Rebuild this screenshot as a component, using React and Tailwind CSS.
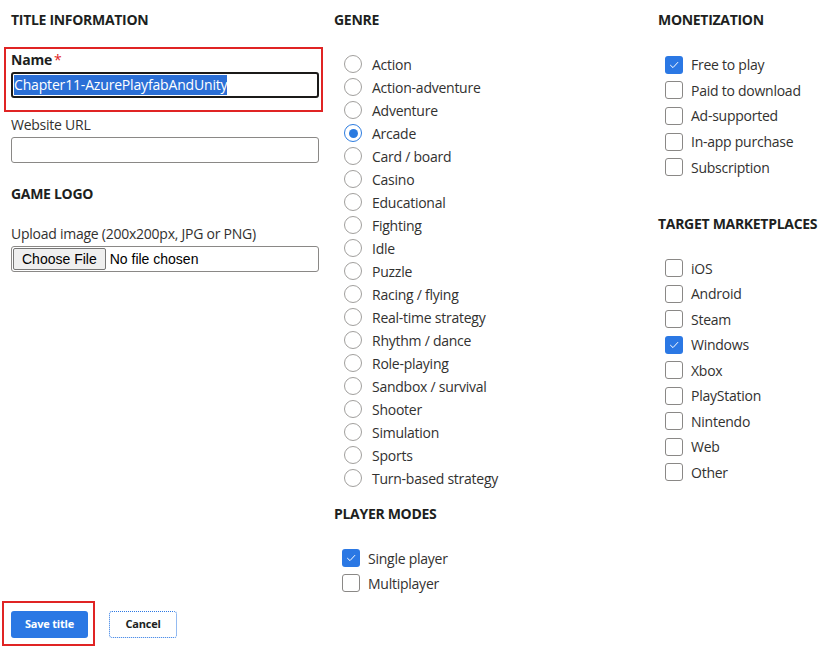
import React from "react";

const font = { fontFamily: '"Open Sans", "Noto Sans", sans-serif' };

function Heading({ children, className = "" }) {
  return (
    <div className={"h-5 whitespace-nowrap text-[14px] leading-5 font-bold tracking-[-0.3px] text-[#201f1e] " + className}>
      {children}
    </div>
  );
}

function Radio({ label, checked }) {
  return (
    <div className="flex h-[23px] items-center pl-[10px]">
      {checked ? (
        <span className="flex h-[18px] w-[18px] items-center justify-center rounded-full border border-[#2b7be0] bg-white">
          <span className="h-[9px] w-[9px] rounded-full bg-[#2b7be0]" />
        </span>
      ) : (
        <span className="h-[18px] w-[18px] rounded-full border border-[#a19f9d] bg-white" />
      )}
      <span className="ml-[10px] whitespace-nowrap text-[14px] tracking-[-0.25px] text-[#323130]">{label}</span>
    </div>
  );
}

function Check({ label, checked, indent = "pl-[7px]", gap = "ml-[8px]", h = "h-[25.6px]" }) {
  return (
    <div className={"flex items-center " + h + " " + indent}>
      {checked ? (
        <span className="flex h-[18px] w-[18px] items-center justify-center rounded-[3px] bg-[#2b78e4]">
          <svg width="12" height="12" viewBox="0 0 12 12" fill="none">
            <path d="M2.5 6.3 L5 8.6 L9.8 3.4" stroke="white" strokeWidth="1" strokeLinecap="round" strokeLinejoin="round" />
          </svg>
        </span>
      ) : (
        <span className="h-[18px] w-[18px] rounded-[3px] border border-[#8a8886] bg-white" />
      )}
      <span className={gap + " whitespace-nowrap text-[14px] tracking-[-0.25px] text-[#323130]"}>{label}</span>
    </div>
  );
}

const genres = [
  "Action",
  "Action-adventure",
  "Adventure",
  "Arcade",
  "Card / board",
  "Casino",
  "Educational",
  "Fighting",
  "Idle",
  "Puzzle",
  "Racing / flying",
  "Real-time strategy",
  "Rhythm / dance",
  "Role-playing",
  "Sandbox / survival",
  "Shooter",
  "Simulation",
  "Sports",
  "Turn-based strategy",
];

const monetization = [
  ["Free to play", true],
  ["Paid to download", false],
  ["Ad-supported", false],
  ["In-app purchase", false],
  ["Subscription", false],
];

const markets = [
  ["iOS", false],
  ["Android", false],
  ["Steam", false],
  ["Windows", true],
  ["Xbox", false],
  ["PlayStation", false],
  ["Nintendo", false],
  ["Web", false],
  ["Other", false],
];

export default function App() {
  return (
    <div className="h-[652px] w-[822px] overflow-hidden bg-white pl-[11px] pt-[10px]" style={font}>
      <div className="grid grid-cols-[308px_309px_1fr] gap-x-[15px]">
        {/* Column 1 */}
        <div className="flex flex-col">
          <Heading>TITLE INFORMATION</Heading>
          <div className="relative mt-[20px]">
            <div className="pointer-events-none absolute -left-[7px] -top-[3px] h-[65px] w-[319px] border-2 border-[#e02424]" />
            <div className="h-5 text-[14px] font-bold leading-5 tracking-[-0.2px] text-[#201f1e]">
              Name<span className="ml-[2px] font-normal text-[#e02424]">*</span>
            </div>
            <div className="mt-[2px] flex h-[26px] items-center rounded-[3px] border-2 border-[#1b1a19] px-[1px]">
              <span className="bg-[#2b6fd6] text-[14px] leading-[20px] tracking-[-0.17px] text-white">
                Chapter11-AzurePlayfabAndUnity
              </span>
            </div>
          </div>
          <div className="mt-[17px] h-5 text-[14px] leading-5 tracking-[-0.25px] text-[#323130]">Website URL</div>
          <div className="mt-[2px] h-[26px] rounded-[3px] border border-[#8a8886]" />
          <Heading className="mt-[21px]">GAME LOGO</Heading>
          <div className="mt-[20px] h-5 text-[14px] leading-5 tracking-[-0.25px] text-[#323130]">
            Upload image (200x200px, JPG or PNG)
          </div>
          <div
            className="mt-[2px] flex h-[26px] items-center rounded-[3px] border border-[#8a8886] px-[1px]"
            style={{ fontFamily: '"Liberation Sans", Arial, sans-serif' }}
          >
            <span className="flex h-[22px] items-center rounded-[2px] border border-[#767676] bg-[#efefef] px-[8px] text-[14px] text-black">
              Choose File
            </span>
            <span className="ml-[4px] text-[14px] text-black">No file chosen</span>
          </div>
        </div>

        {/* Column 2 */}
        <div className="flex flex-col">
          <Heading>GENRE</Heading>
          <div className="mt-[22.5px] flex flex-col">
            {genres.map((g) => (
              <Radio key={g} label={g} checked={g === "Arcade"} />
            ))}
          </div>
          <Heading className="mt-[14.5px]">PLAYER MODES</Heading>
          <div className="mt-[21.5px] flex flex-col">
            <Check label="Single player" checked indent="pl-[8px]" gap="ml-[8px]" h="h-[25px]" />
            <Check label="Multiplayer" checked={false} indent="pl-[8px]" gap="ml-[8px]" h="h-[25px]" />
          </div>
        </div>

        {/* Column 3 */}
        <div className="flex min-w-0 flex-col">
          <Heading>MONETIZATION</Heading>
          <div className="mt-[22px] flex flex-col">
            {monetization.map(([l, c]) => (
              <Check key={l} label={l} checked={c} />
            ))}
          </div>
          <Heading className="mt-[34.5px]">TARGET MARKETPLACES</Heading>
          <div className="mt-[21px] flex flex-col">
            {markets.map(([l, c]) => (
              <Check key={l} label={l} checked={c} h="h-[25.5px]" />
            ))}
          </div>
        </div>
      </div>

      {/* Footer */}
      <div className="mt-[15.5px] flex items-center gap-[21px]">
        <div className="relative">
          <div className="pointer-events-none absolute -left-[9px] -top-[10px] h-[45px] w-[93px] border-2 border-[#e02424]" />
          <button className="flex h-[27px] w-[77px] items-center justify-center rounded-[3px] bg-[#2b78e4] text-[11px] font-bold tracking-[-0.2px] text-white">
            Save title
          </button>
        </div>
        <button className="flex h-[27px] w-[68px] items-center justify-center rounded-[3px] border border-dotted border-[#2b78e4] bg-white text-[11px] font-bold tracking-[-0.2px] text-[#201f1e]">
          Cancel
        </button>
      </div>
    </div>
  );
}
